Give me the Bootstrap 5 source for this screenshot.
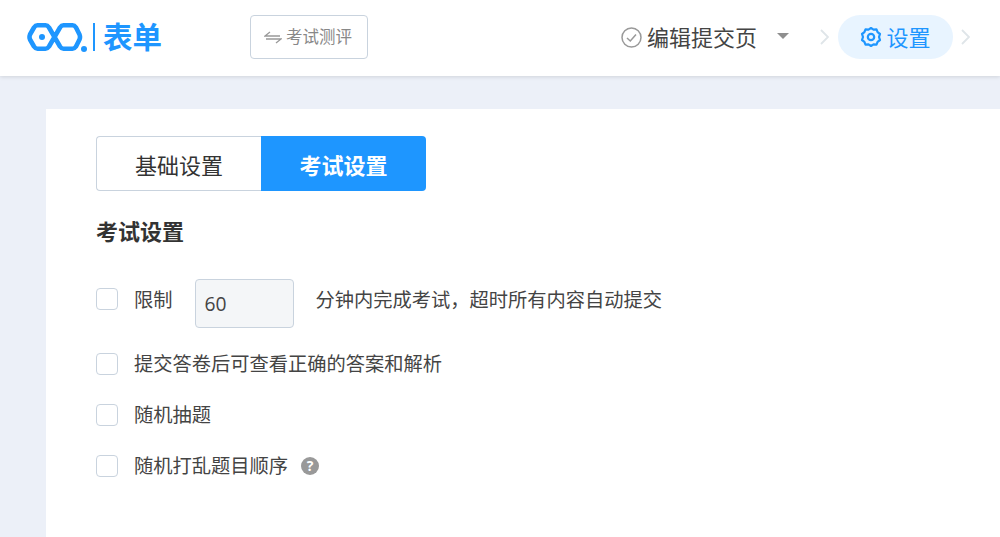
<!DOCTYPE html>
<html lang="zh">
<head>
<meta charset="utf-8">
<title>考试设置</title>
<link href="https://cdn.jsdelivr.net/npm/bootstrap@5.3.0/dist/css/bootstrap.min.css" rel="stylesheet">
<style>
html,body{height:100%;overflow:hidden}
body{background:#ecf0f8;font-family:"Open Sans","Noto Sans CJK SC",sans-serif;color:#444;font-size:19.25px}
.topbar{height:76px;background:#fff;box-shadow:0 1px 4px rgba(0,0,0,.12);padding:0 30px 2px 27px}
.logo-wrap{width:223px;color:#1e96ff}
.logo-bar{width:2px;height:28px;background:#1e96ff;margin:0 8px 0 6px}
.logo-text{font-size:29.5px;font-weight:700;line-height:1}
.exam-btn{width:118px;height:44px;border:1px solid #c9d3de;border-radius:4px;color:#888;font-size:16.5px;background:#fff;padding:0 2px 0 0;gap:4px}
.step-one{font-size:22px;color:#444;gap:5px}
.caret-down{width:0;height:0;border-left:6px solid transparent;border-right:6px solid transparent;border-top:6px solid #8f8f8f;margin:0 0 2px 15px}
.step-arrow{margin:0 9px 0 31px}
.step-on{width:115px;height:44px;border-radius:22px;background:#e8f4ff;color:#1e96ff;font-size:22px;gap:4px}
.sheet{background:#fff;margin:33px 0 0 46px;height:428px;padding:27px 50px}
.tabset{width:330px;height:55px}
.tab-a,.tab-b{height:55px;font-size:22px;padding:4px 0 0}
.tab-a{width:165px;border:1px solid #c9d3de;border-right:0;border-radius:4px 0 0 4px;color:#333;background:#fff}
.tab-b{width:165px;background:#1e96ff;color:#fff;font-weight:700;border-radius:0 4px 4px 0;border:0}
.sect-title{font-size:22px;font-weight:700;color:#333;line-height:30px;margin:25px 0 33px}
.opt-row{gap:16px;color:#444}
.opt-label{padding-top:1px}
.opt-box{width:22px;height:22px;margin:0;border:1.5px solid #c9d3de;border-radius:4px;background:#fff;appearance:none;flex:none}
.opt-one{height:49px;margin-bottom:10px}
.opt-one .opt-box,.opt-one .opt-label{margin-bottom:9px}
.opt-one .opt-label{padding-top:3px}
.opt-two{height:51px}
.num-box{width:99px;height:49px;background:#f4f6f8;border:1.5px solid #c9d3de;border-radius:4px;font-size:19.25px;color:#444;padding:2px 9px 0;margin:0 6px 0 6px}
.help-dot{width:18px;height:18px;border-radius:50%;background:#999;color:#fff;font-size:14px;font-weight:700;line-height:18px;text-align:center;margin:1px 0 0 -3px}
</style>
</head>
<body>
<header class="topbar d-flex align-items-center">
  <div class="logo-wrap d-flex align-items-center">
    <svg width="60" height="29" viewBox="0 0 60 29" aria-hidden="true"><path d="M10.500 2.300H18.500Q20.500 2.300 22 4.500L33 23.500Q34.500 25.700 36.500 25.700H45.500Q47.500 25.700 49 23.500L52.500 16.500Q53.500 14 52.500 11.500L49 4.500Q47.500 2.300 45.500 2.300H36.500Q34.500 2.300 33 4.500L22 23.500Q20.500 25.700 18.500 25.700H10.500Q8.500 25.700 7 23.500L3 16.500Q2 14 3 11.500L7 4.500Q8.500 2.300 10.500 2.300Z" fill="none" stroke="#1e96ff" stroke-width="4.600" stroke-linejoin="round"/><circle cx="15" cy="14" r="3" fill="#1e96ff"/><circle cx="57" cy="26" r="3" fill="#1e96ff"/></svg>
    <span class="logo-bar"></span>
    <span class="logo-text">表单</span>
  </div>
  <button class="exam-btn d-flex align-items-center justify-content-center" type="button">
    <svg width="18" height="14" viewBox="0 0 18 14" aria-hidden="true"><path d="M16 6H1L6 2M2 9H17L12 13" fill="none" stroke="#999" stroke-width="1.300"/></svg>
    <span>考试测评</span>
  </button>
  <div class="ms-auto d-flex align-items-center">
    <div class="step-one d-flex align-items-center">
      <svg width="21" height="21" viewBox="0 0 21 21" aria-hidden="true"><circle cx="10.500" cy="10.500" r="9.500" fill="none" stroke="#999" stroke-width="1.500"/><path d="M6 11L9.300 14L15 7.500" fill="none" stroke="#999" stroke-width="1.500"/></svg>
      <span>编辑提交页</span>
      <span class="caret-down"></span>
    </div>
    <svg class="step-arrow" width="9" height="16" viewBox="0 0 9 16" aria-hidden="true"><path d="M1 1L8 8L1 15" fill="none" stroke="#dfe5e9" stroke-width="1.800"/></svg>
    <div class="step-on d-flex align-items-center justify-content-center">
      <svg width="22" height="22" viewBox="0 0 22 22" aria-hidden="true"><path d="M11 2L13.500 3.600L16.500 3.400L17.600 6.200L20 8L19 11L20 14L17.600 15.800L16.500 18.600L13.500 18.400L11 20L8.500 18.400L5.500 18.600L4.400 15.800L2 14L3 11L2 8L4.400 6.200L5.500 3.400L8.500 3.600Z" fill="none" stroke="#1e96ff" stroke-width="2.200" stroke-linejoin="round"/><circle cx="11" cy="11" r="3.200" fill="none" stroke="#1e96ff" stroke-width="2.200"/></svg>
      <span>设置</span>
    </div>
    <svg class="ms-2" width="9" height="16" viewBox="0 0 9 16" aria-hidden="true"><path d="M1 1L8 8L1 15" fill="none" stroke="#dfe5e9" stroke-width="1.800"/></svg>
  </div>
</header>
<main class="sheet">
  <div class="tabset d-flex">
    <button class="tab-a" type="button">基础设置</button>
    <button class="tab-b" type="button">考试设置</button>
  </div>
  <div class="sect-title">考试设置</div>
  <div class="opt-row opt-one d-flex align-items-center">
    <input class="opt-box" type="checkbox" aria-label="限制">
    <span class="opt-label">限制</span>
    <div class="num-box d-flex align-items-center">60</div>
    <span class="opt-label">分钟内完成考试，超时所有内容自动提交</span>
  </div>
  <div class="opt-row opt-two d-flex align-items-center">
    <input class="opt-box" type="checkbox" aria-label="提交答卷后可查看正确的答案和解析">
    <span class="opt-label">提交答卷后可查看正确的答案和解析</span>
  </div>
  <div class="opt-row opt-two d-flex align-items-center">
    <input class="opt-box" type="checkbox" aria-label="随机抽题">
    <span class="opt-label">随机抽题</span>
  </div>
  <div class="opt-row opt-two d-flex align-items-center">
    <input class="opt-box" type="checkbox" aria-label="随机打乱题目顺序">
    <span class="opt-label">随机打乱题目顺序</span>
    <span class="help-dot">?</span>
  </div>
</main>
<script src="https://cdn.jsdelivr.net/npm/bootstrap@5.3.0/dist/js/bootstrap.bundle.min.js"></script>
</body>
</html>
